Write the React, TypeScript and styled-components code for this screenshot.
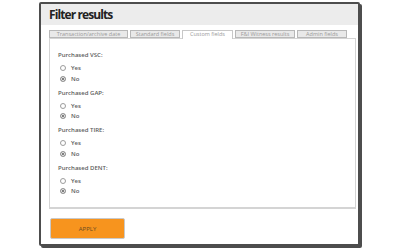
import React, { useState } from 'react';
import styled, { createGlobalStyle } from 'styled-components';

const GlobalStyle = createGlobalStyle`
  html, body {
    margin: 0;
    padding: 0;
    background: #ffffff;
    font-family: "Open Sans", "Liberation Sans", sans-serif;
  }
`;

const Page = styled.div`
  width: 400px;
  height: 250px;
  padding: 2px 0 0 39px;
  box-sizing: border-box;
`;

const Window = styled.div`
  width: 321px;
  height: 244px;
  box-sizing: border-box;
  border: 2px solid #4d4d4d;
  border-radius: 2px;
  box-shadow: 2px 2px 0 #4d4d4d;
  background: #fff;
  display: flex;
  flex-direction: column;
`;

const Header = styled.div`
  height: 21px;
  background: #ececec;
  display: flex;
  align-items: center;
  padding-left: 8px;
`;

const Title = styled.h1`
  margin: 0;
  font-size: 12px;
  font-weight: 700;
  letter-spacing: -0.9px;
  color: #222;
`;

const Body = styled.div`
  padding: 4px 0 0 8px;
  display: flex;
  flex-direction: column;
`;

const TabRow = styled.div`
  display: flex;
  align-items: flex-end;
  height: 9px;
  gap: 2px;
`;

const Tab = styled.div<{ $w: number; $active?: boolean }>`
  width: ${p => p.$w}px;
  height: ${p => (p.$active ? 9 : 8)}px;
  box-sizing: border-box;
  border: 1px solid ${p => (p.$active ? '#c8c8c8' : '#b8b8b8')};
  border-bottom: ${p => (p.$active ? 'none' : '1px solid #b8b8b8')};
  background: ${p => (p.$active ? '#fff' : '#e9e9e9')};
  font-size: 5.5px;
  line-height: 6px;
  color: #9a9a9a;
  text-align: center;
  white-space: nowrap;
  overflow: hidden;
  margin-bottom: ${p => (p.$active ? -1 : 0)}px;
  position: relative;
`;

const Panel = styled.div`
  width: 307px;
  height: 171px;
  box-sizing: border-box;
  border: 1px solid #d4d4d4;
  border-bottom: 2px solid #d4d4d4;
  padding: 12px 0 0 8px;
`;

const Group = styled.div`
  display: flex;
  flex-direction: column;
  margin-bottom: 3.5px;
`;

const FieldLabel = styled.div`
  font-size: 6px;
  line-height: 8px;
  font-weight: 600;
  color: #5c5c5c;
  margin-bottom: 5px;
`;

const Option = styled.label`
  display: flex;
  align-items: center;
  height: 8px;
  margin: 0 0 2.5px 2px;
  font-size: 6px;
  font-weight: 600;
  color: #5c5c5c;
  cursor: pointer;
`;

const Radio = styled.span<{ $checked: boolean }>`
  width: 6px;
  height: 6px;
  box-sizing: border-box;
  border-radius: 50%;
  border: 1px solid #9c9c9c;
  background: ${p => (p.$checked ? '#555' : '#fff')};
  box-shadow: ${p => (p.$checked ? 'inset 0 0 0 1px #fff' : 'none')};
  margin-right: 5px;
`;

const ApplyButton = styled.button`
  margin-top: 9px;
  margin-left: 1px;
  width: 75px;
  height: 21px;
  border: 1px solid #c9c9c9;
  border-radius: 2px;
  background: #f7941e;
  font-family: "Open Sans", "Liberation Sans", sans-serif;
  font-size: 6px;
  color: #6a4a20;
  padding: 0;
`;

const tabs = [
  { name: 'Transaction/archive date', w: 79 },
  { name: 'Standard fields', w: 50 },
  { name: 'Custom fields', w: 51, active: true },
  { name: 'F&I Witness results', w: 60 },
  { name: 'Admin fields', w: 50 },
];

const fields = ['VSC', 'GAP', 'TIRE', 'DENT'];

export default function App() {
  const [values, setValues] = useState<Record<string, string>>({
    VSC: 'No',
    GAP: 'No',
    TIRE: 'No',
    DENT: 'No',
  });

  return (
    <Page>
      <GlobalStyle />
      <Window>
        <Header>
          <Title>Filter results</Title>
        </Header>
        <Body>
          <TabRow>
            {tabs.map(t => (
              <Tab key={t.name} $w={t.w} $active={t.active}>
                {t.name}
              </Tab>
            ))}
          </TabRow>
          <Panel>
            {fields.map(f => (
              <Group key={f}>
                <FieldLabel>Purchased {f}:</FieldLabel>
                {['Yes', 'No'].map(opt => (
                  <Option key={opt} onClick={() => setValues({ ...values, [f]: opt })}>
                    <Radio $checked={values[f] === opt} />
                    {opt}
                  </Option>
                ))}
              </Group>
            ))}
          </Panel>
          <ApplyButton>APPLY</ApplyButton>
        </Body>
      </Window>
    </Page>
  );
}
